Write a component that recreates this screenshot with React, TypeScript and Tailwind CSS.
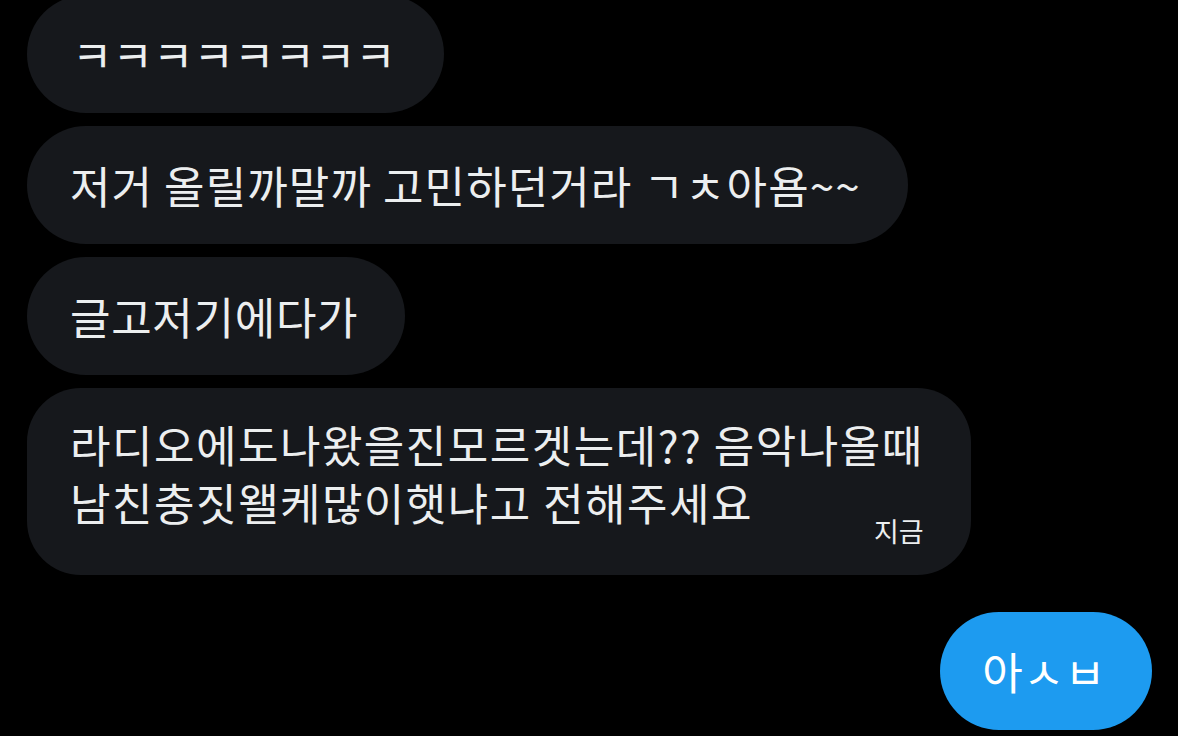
const font = { fontFamily: '"Noto Sans CJK KR", "Noto Sans", sans-serif' };

export default function App() {
  return (
    <div
      className="w-[1178px] h-[736px] overflow-hidden bg-black flex flex-col gap-[13px] pl-[27px] pr-[26px]"
      style={font}
    >
      <div className="-mt-[5px] self-start rounded-full bg-[#16181c] pl-[45px] pr-[48px] py-[30px] text-[44px] leading-[58px] text-[#eceeef] whitespace-nowrap">
        ㅋㅋㅋㅋㅋㅋㅋㅋ
      </div>
      <div className="self-start rounded-full bg-[#16181c] pl-[43px] pr-[47px] py-[30px] text-[44px] leading-[58px] tracking-[1.1px] text-[#eceeef] whitespace-nowrap">
        저거 올릴까말까 고민하던거라 ㄱㅊ아욤~~
      </div>
      <div className="self-start rounded-full bg-[#16181c] pl-[43px] pr-[47px] py-[30px] text-[44px] leading-[58px] tracking-[0.7px] text-[#eceeef] whitespace-nowrap">
        글고저기에다가
      </div>

      {/* multi-line with timestamp */}
      <div className="self-start rounded-[54px] bg-[#16181c] pl-[43px] pr-[47px] pt-[27px] pb-[26px] text-[#eceeef]">
        <div className="text-[44px] leading-[58px] tracking-[1.5px] whitespace-nowrap">
          <div>라디오에도나왔을진모르겟는데?? 음악나올때</div>
          <div>남친충짓왤케많이햇냐고 전해주세요</div>
        </div>
        <div className="-mt-[18px] flex justify-end text-[27px] leading-[36px]">
          지금
        </div>
      </div>

      <div className="mt-[24px] self-end rounded-full bg-[#1d9bf0] pl-[42px] pr-[46px] py-[30px] text-[44px] leading-[58px] tracking-[0.8px] text-white whitespace-nowrap">
        아ㅅㅂ
      </div>
    </div>
  );
}
